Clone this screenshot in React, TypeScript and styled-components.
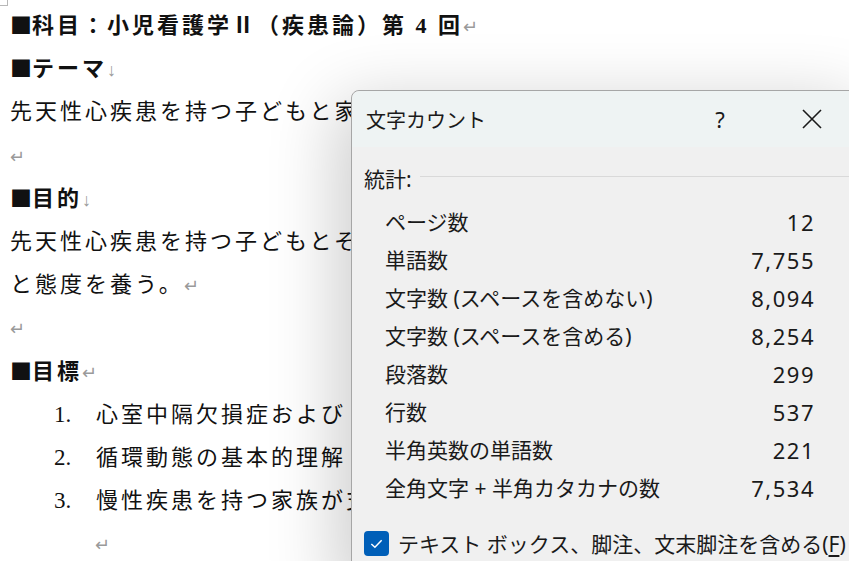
import React from 'react';
import styled, { createGlobalStyle } from 'styled-components';

const Global = createGlobalStyle`
  html, body {
    margin: 0;
    padding: 0;
    background: #ffffff;
    overflow: hidden;
  }
`;

const Page = styled.div`
  position: relative;
  width: 849px;
  height: 561px;
  overflow: hidden;
  background: #ffffff;
`;

const CornerMark = styled.div`
  position: absolute;
  left: 0;
  top: 0;
  width: 7px;
  height: 5px;
  border-right: 1px solid #b8b8b8;
  border-bottom: 1px solid #b8b8b8;
`;

const Doc = styled.div`
  padding: 4px 0 0 10px;
  font-family: 'Liberation Serif', 'Noto Sans CJK JP', serif;
  font-size: 22px;
  letter-spacing: 3px;
  color: #111;
`;

const Line = styled.div<{ $bold?: boolean; $indent?: number }>`
  height: 43.2px;
  line-height: 43px;
  white-space: nowrap;
  font-weight: ${(p) => (p.$bold ? 700 : 400)};
  padding-left: ${(p) => p.$indent || 0}px;
`;

const Square = styled.span`
  font-family: 'Noto Sans CJK JP', sans-serif;
  letter-spacing: 0;
  line-height: 1;
`;

const Mark = styled.span`
  color: #9a9a9a;
  font-weight: 400;
  font-size: 18px;
  letter-spacing: 0;
  line-height: 1;
`;

const Num = styled.span`
  display: inline-block;
  width: 42px;
  letter-spacing: 0;
  font-size: 23px;
`;

const Dialog = styled.div`
  position: absolute;
  left: 351px;
  top: 90px;
  width: 520px;
  height: 500px;
  border: 1px solid #a6a6a6;
  border-radius: 8px 0 0 0;
  background: #f0f0f0;
  box-shadow: -14px 12px 70px rgba(0, 0, 0, 0.2);
  font-family: 'Noto Sans', 'Noto Sans CJK JP', sans-serif;
  color: #1a1a1a;
  overflow: hidden;
`;

const TitleBar = styled.div`
  display: flex;
  align-items: center;
  height: 56px;
  padding-left: 14px;
  background: #eef3f3;
  border-radius: 8px 0 0 0;
`;

const Title = styled.div`
  flex: 1;
  font-size: 20px;
`;

const TitleButton = styled.div<{ $w: number }>`
  width: ${(p) => p.$w}px;
  display: flex;
  justify-content: center;
  align-items: center;
  font-size: 22px;
`;

const Body = styled.div`
  padding: 17px 0 0 12px;
`;

const GroupHead = styled.div`
  display: flex;
  align-items: center;
  gap: 8px;
  font-size: 21px;
  line-height: 30px;
`;

const Rule = styled.div`
  flex: 1;
  height: 1px;
  background: #d9d9d9;
  margin-top: -5px;
`;

const Stats = styled.div`
  width: 430px;
  margin: 9px 0 0 21px;
`;

const StatRow = styled.div`
  display: flex;
  justify-content: space-between;
  font-size: 21px;
  line-height: 38px;
  white-space: nowrap;
`;

const Value = styled.span`
  font-size: 22px;
  letter-spacing: 1.5px;
`;

const CheckRow = styled.div`
  display: flex;
  align-items: center;
  gap: 9px;
  margin-top: 21px;
  font-size: 21px;
  white-space: nowrap;
`;

const Box = styled.div`
  width: 25px;
  height: 25px;
  border-radius: 4px;
  background: #005fb8;
  display: flex;
  align-items: center;
  justify-content: center;
`;

const U = styled.span`
  text-decoration: underline;
  text-underline-offset: 3px;
`;

const stats: [string, string][] = [
  ['ページ数', '12'],
  ['単語数', '7,755'],
  ['文字数 (スペースを含めない)', '8,094'],
  ['文字数 (スペースを含める)', '8,254'],
  ['段落数', '299'],
  ['行数', '537'],
  ['半角英数の単語数', '221'],
  ['全角文字 + 半角カタカナの数', '7,534'],
];

const goals = ['心室中隔欠損症および', '循環動態の基本的理解', '慢性疾患を持つ家族が支'];

export default function App() {
  return (
    <Page>
      <Global />
      <CornerMark />
      <Doc>
        <Line $bold>
          <Square>■</Square>科目：小児看護学Ⅱ（疾患論）第 4 回<Mark>↵</Mark>
        </Line>
        <Line $bold>
          <Square>■</Square>テーマ<Mark>↓</Mark>
        </Line>
        <Line>先天性心疾患を持つ子どもと家族の看護</Line>
        <Line>
          <Mark>↵</Mark>
        </Line>
        <Line $bold>
          <Square>■</Square>目的<Mark>↓</Mark>
        </Line>
        <Line>先天性心疾患を持つ子どもとその家族</Line>
        <Line>
          と態度を養う。<Mark>↵</Mark>
        </Line>
        <Line>
          <Mark>↵</Mark>
        </Line>
        <Line $bold>
          <Square>■</Square>目標<Mark>↵</Mark>
        </Line>
        {goals.map((g, i) => (
          <Line key={g} $indent={44}>
            <Num>{i + 1}.</Num>
            {g}
          </Line>
        ))}
        <Line $indent={85}>
          <Mark>↵</Mark>
        </Line>
      </Doc>

      <Dialog>
        <TitleBar>
          <Title>文字カウント</Title>
          <TitleButton $w={64}>?</TitleButton>
          <TitleButton $w={120}>
            <svg width="22" height="22" viewBox="0 0 22 22">
              <path d="M2 2 L20 20 M20 2 L2 20" stroke="#1a1a1a" strokeWidth="1.6" fill="none" />
            </svg>
          </TitleButton>
        </TitleBar>
        <Body>
          <GroupHead>
            統計:
            <Rule />
          </GroupHead>
          <Stats>
            {stats.map(([label, value]) => (
              <StatRow key={label}>
                <span>{label}</span>
                <Value>{value}</Value>
              </StatRow>
            ))}
          </Stats>
          <CheckRow>
            <Box>
              <svg width="15" height="15" viewBox="0 0 16 16">
                <path d="M2.5 8.5 L6.3 12 L13.5 4.5" stroke="#fff" strokeWidth="1.6" fill="none" />
              </svg>
            </Box>
            <span>
              テキスト ボックス、脚注、文末脚注を含める(<U>F</U>)
            </span>
          </CheckRow>
        </Body>
      </Dialog>
    </Page>
  );
}
